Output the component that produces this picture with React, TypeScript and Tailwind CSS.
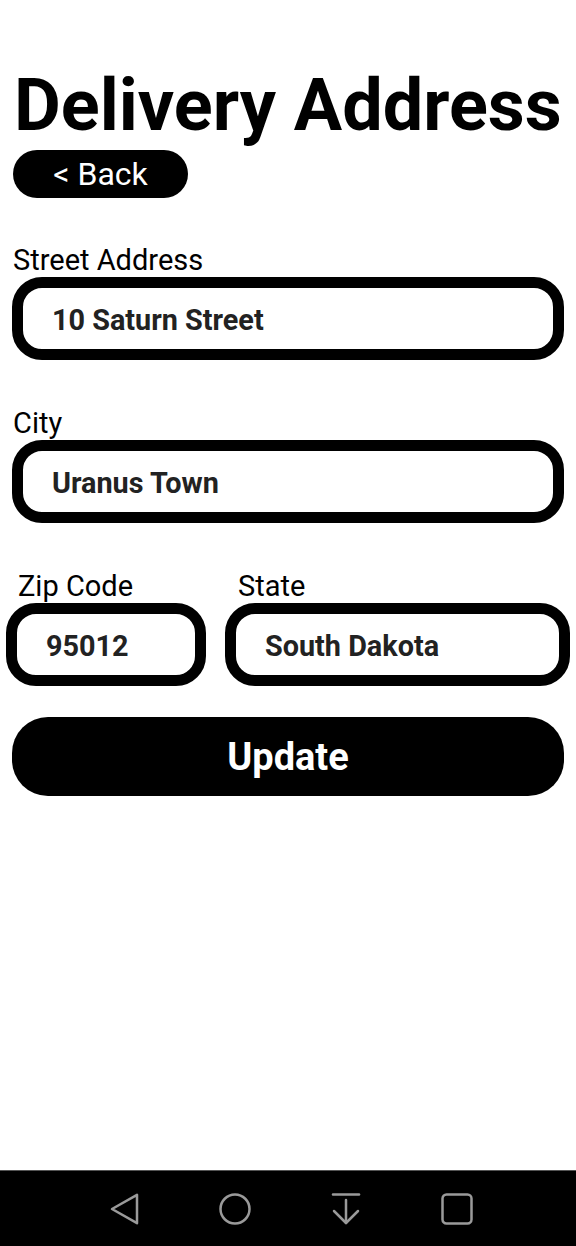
import React from "react";

const font = "font-['Roboto',_'Liberation_Sans',_sans-serif]";

function Field({ value, className }: { value: string; className: string }) {
  return (
    <div
      className={`h-[83px] border-[11px] border-black rounded-[30px] bg-white flex items-center pl-[29px] pt-[3px] ${className}`}
    >
      <span className="text-[28.8px] font-bold text-[#222222] leading-none">{value}</span>
    </div>
  );
}

export default function App() {
  return (
    <div className={`${font} w-[576px] h-[1246px] bg-white flex flex-col`}>
      <main className="flex-1 flex flex-col">
        <h1 className="mt-[70px] ml-[14px] text-[72px] leading-[72px] font-bold text-black">
          Delivery Address
        </h1>
        <button className="mt-[8px] ml-[13px] w-[175px] h-[48px] rounded-full bg-black text-white text-[32px] leading-none flex items-center justify-center">
          &lt; Back
        </button>

        <div className="mt-[45px] px-[12px] flex flex-col">
          <label className="ml-[1px] text-[29px] leading-[34px] text-black">Street Address</label>
          <Field value="10 Saturn Street" className="w-[552px]" />
        </div>

        <div className="mt-[46px] px-[12px] flex flex-col">
          <label className="ml-[1px] text-[29px] leading-[34px] text-black">City</label>
          <Field value="Uranus Town" className="w-[552px]" />
        </div>

        <div className="mt-[46px] flex">
          <div className="ml-[6px] flex flex-col">
            <label className="ml-[12px] text-[29px] leading-[34px] text-black">Zip Code</label>
            <Field value="95012" className="w-[200px]" />
          </div>
          <div className="ml-[19px] flex flex-col">
            <label className="ml-[13px] text-[29px] leading-[34px] text-black">State</label>
            <Field value="South Dakota" className="w-[345px]" />
          </div>
        </div>

        <button className="mt-[31px] mx-[12px] h-[79px] rounded-[36px] bg-black text-white text-[38px] font-bold leading-none flex items-center justify-center">
          Update
        </button>
      </main>

      <nav className="h-[76px] bg-black border-t border-[#555555] flex items-center justify-center gap-[79px] pl-[4px]">
        <svg width="32" height="32" viewBox="0 0 32 32" fill="none" stroke="#9a9a9a" strokeWidth="2.5" strokeLinejoin="round">
          <path d="M4 16 L29 1.8 L29 30.2 Z" />
        </svg>
        <svg width="32" height="32" viewBox="0 0 32 32" fill="none" stroke="#9a9a9a" strokeWidth="2.5">
          <circle cx="16" cy="16" r="14.5" />
        </svg>
        <svg width="32" height="32" viewBox="0 0 32 32" fill="none" stroke="#9a9a9a" strokeWidth="2.5" strokeLinecap="round" strokeLinejoin="round">
          <path d="M3 1.5 H29" />
          <path d="M16 7 V30" />
          <path d="M4 18 L16 30 L28 18" />
        </svg>
        <svg width="32" height="32" viewBox="0 0 32 32" fill="none" stroke="#9a9a9a" strokeWidth="2.5">
          <rect x="1.5" y="1.5" width="29" height="29" rx="4" />
        </svg>
      </nav>
    </div>
  );
}
